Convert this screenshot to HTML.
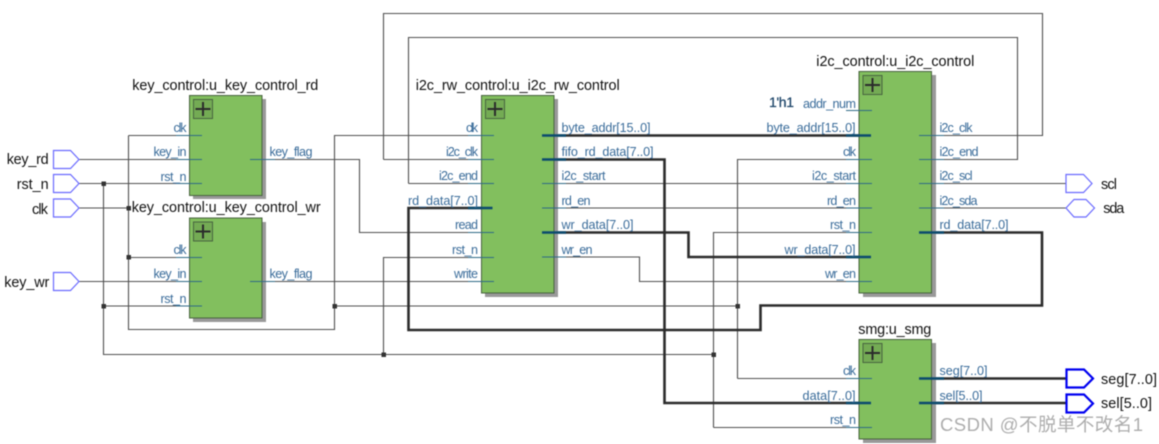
<!DOCTYPE html>
<html>
<head>
<meta charset="utf-8">
<style>
html,body{margin:0;padding:0;background:#fff;width:1159px;height:444px;overflow:hidden}
svg{display:block;filter:blur(.4px)}
text{font-family:"Liberation Sans","Noto Sans CJK SC",sans-serif}
.w{fill:none;stroke:#505050;stroke-width:1.1}
.t{fill:none;stroke:#2b2b2b;stroke-width:2.6}
.s{stroke:#2f6a86;stroke-width:1;fill:none}
.b{stroke:#0b4a6e;stroke-width:2.4;fill:none}
.sh{fill:#999}
.g{fill:#82bf5e;stroke:#48633f;stroke-width:1}
.ib{fill:#74ab54;stroke:#48633f;stroke-width:1}
.pl{fill:none;stroke:#2b2b2b;stroke-width:2}
.l{font-size:12.6px;fill:#3a6c9a}
.e{text-anchor:end}
.n{font-size:14.4px;fill:#111}
.p{fill:#fff;stroke:#6a6aff;stroke-width:1.2}
.q{fill:#fff;stroke:#0000f0;stroke-width:2.2}
.d{fill:#333}
</style>
</head>
<body>
<svg width="1159" height="444" viewBox="0 0 1159 444" xmlns="http://www.w3.org/2000/svg">
<path class="w" d="M79 159.5H202M79 183.5H202M79 208H128.5M128.5 135.5V329.5H334.5V135.5H494M128.5 135.5H202M128.5 257.5H202M103.5 183.5V354.5H713.5M103.5 306H202M79 281.5H494M250 159.5H359.5V232.5H494M383.5 354.5V257.5H494M713.5 427.5V232.5H872M713.5 427.5H872M335 306H737.5M737.5 378.5V159.5H872M737.5 378.5H872M383.5 159.5V13.5H1042.5V135.5H919M383.5 159.5H494M408.5 183.5V37.5H1017.5V159.5H919M408.5 183.5H494M542 183.5H872M542 208H872M542 257H639.5V281.5H872M919 183.5H1066M919 208H1066"/>
<path class="t" d="M492 208H408.5V330H760.5V305.5H1042V232.5H919M542 135.5H871M542 159.5H664.5V403H871M542 232.5H688.5V257H871M919 378.5H1066M919 403H1066"/>
<g class="d">
<rect x="101.500" y="181.500" width="4.500" height="4.500"/><rect x="126.500" y="206" width="4.500" height="4.500"/><rect x="126.500" y="255" width="4.500" height="4.500"/><rect x="101.500" y="304" width="4.500" height="4.500"/><rect x="332.500" y="304" width="4.500" height="4.500"/><rect x="381.500" y="352.500" width="4.500" height="4.500"/><rect x="711.500" y="352.500" width="4.500" height="4.500"/><rect x="735.500" y="304" width="4.500" height="4.500"/>
</g>
<rect class="sh" x="193" y="99" width="73" height="100"/><rect class="g" x="189.500" y="95.500" width="72.500" height="100"/>
<rect class="sh" x="193" y="222" width="73" height="100"/><rect class="g" x="189.500" y="218" width="72.500" height="100"/>
<rect class="sh" x="485" y="99" width="73" height="198"/><rect class="g" x="481.500" y="95.500" width="72.500" height="197.500"/>
<rect class="sh" x="863" y="75" width="73" height="222"/><rect class="g" x="859" y="71.500" width="72.500" height="221.500"/>
<rect class="sh" x="863" y="343" width="73" height="100"/><rect class="g" x="859" y="339.500" width="72.500" height="99.500"/>
<g>
<rect class="ib" x="193.500" y="99.500" width="19" height="19"/><path class="pl" d="M203 102V116M195.500 109H210.500"/>
<rect class="ib" x="193.500" y="222" width="19" height="19"/><path class="pl" d="M203 224.500V238.500M195.500 231.500H210.500"/>
<rect class="ib" x="485.500" y="99.500" width="19" height="19"/><path class="pl" d="M495 102V116M487.500 109H502.500"/>
<rect class="ib" x="863" y="75.500" width="19" height="19"/><path class="pl" d="M872.500 78V92M865 85H880"/>
<rect class="ib" x="863" y="343.500" width="19" height="19"/><path class="pl" d="M872.500 346V360M865 353H880"/>
</g>
<path class="s" d="M176 135.500H202M176 159.500H202M176 183.500H202M250 159.500H275M176 257.500H202M176 281.500H202M176 306H202M250 281.500H275M468 135.500H494M468 159.500H494M468 183.500H494M468 232.500H494M468 257.500H494M468 281.500H494M542 183.500H566M542 208H566M542 257H566M846 110.500H872M846 159.500H872M846 183.500H872M846 208H872M846 232.500H872M846 281.500H872M919 135.500H944M919 159.500H944M919 183.500H944M919 208H944M846 378.500H872M846 427.500H872"/>
<path class="b" d="M468 208H492.500M542 135.500H566M542 159.500H566M542 232.500H566M846 135.500H871M846 257H871M919 232.500H944M846 403H871M919 378.500H944M919 403H944"/>
<g class="l">
<text class="e" x="186.500" y="132" textLength="13">clk</text>
<text class="e" x="186.500" y="156" textLength="33">key_in</text>
<text class="e" x="186.500" y="181" textLength="26">rst_n</text>
<text x="269.500" y="156" textLength="43">key_flag</text>
<text class="e" x="186.500" y="254" textLength="13">clk</text>
<text class="e" x="186.500" y="278" textLength="33">key_in</text>
<text class="e" x="186.500" y="303" textLength="26">rst_n</text>
<text x="269.500" y="278" textLength="43">key_flag</text>
<text class="e" x="478" y="132" textLength="12">clk</text>
<text class="e" x="478" y="156" textLength="32">i2c_clk</text>
<text class="e" x="478" y="180" textLength="39">i2c_end</text>
<text class="e" x="478" y="205" textLength="70">rd_data[7..0]</text>
<text class="e" x="478" y="229" textLength="23">read</text>
<text class="e" x="478" y="254" textLength="26">rst_n</text>
<text class="e" x="478" y="278" textLength="24">write</text>
<text x="561.500" y="132" textLength="89">byte_addr[15..0]</text>
<text x="561.500" y="156" textLength="92">fifo_rd_data[7..0]</text>
<text x="561.500" y="180" textLength="44">i2c_start</text>
<text x="561.500" y="205" textLength="29">rd_en</text>
<text x="561.500" y="229" textLength="72">wr_data[7..0]</text>
<text x="561.500" y="254" textLength="31">wr_en</text>
<text class="e" x="856" y="108" textLength="53">addr_num</text>
<text class="e" x="855.500" y="132" textLength="89">byte_addr[15..0]</text>
<text class="e" x="856" y="156" textLength="13">clk</text>
<text class="e" x="856" y="180" textLength="44">i2c_start</text>
<text class="e" x="856" y="205" textLength="29">rd_en</text>
<text class="e" x="856" y="229" textLength="26">rst_n</text>
<text class="e" x="855.500" y="254" textLength="71">wr_data[7..0]</text>
<text class="e" x="856" y="278" textLength="31">wr_en</text>
<text x="939.500" y="132" textLength="33">i2c_clk</text>
<text x="939.500" y="156" textLength="39">i2c_end</text>
<text x="939.500" y="180" textLength="33">i2c_scl</text>
<text x="939.500" y="205" textLength="38">i2c_sda</text>
<text x="939.500" y="229" textLength="69">rd_data[7..0]</text>
<text class="e" x="856" y="375" textLength="13">clk</text>
<text class="e" x="855.500" y="400" textLength="53">data[7..0]</text>
<text class="e" x="856" y="424" textLength="26">rst_n</text>
<text x="939.500" y="375" textLength="48">seg[7..0]</text>
<text x="939.500" y="400" textLength="43">sel[5..0]</text>
</g>
<g class="n">
<text x="132.300" y="90" textLength="186">key_control:u_key_control_rd</text>
<text x="131.700" y="212" textLength="189">key_control:u_key_control_wr</text>
<text x="415.700" y="90" textLength="204">i2c_rw_control:u_i2c_rw_control</text>
<text x="816.300" y="66" textLength="158">i2c_control:u_i2c_control</text>
<text x="858.300" y="334" textLength="73">smg:u_smg</text>
<text x="6.700" y="164" textLength="42">key_rd</text>
<text x="16.700" y="189" textLength="32">rst_n</text>
<text x="32" y="214" textLength="16">clk</text>
<text x="4.300" y="287" textLength="45">key_wr</text>
<text x="1101" y="189" textLength="16">scl</text>
<text x="1103.300" y="213" textLength="21">sda</text>
<text x="1101" y="384" textLength="56">seg[7..0]</text>
<text x="1101" y="408" textLength="51">sel[5..0]</text>
<text x="769" y="107" textLength="25" style="fill:#1c4468;font-size:14px;stroke:#1c4468;stroke-width:.25">1'h1</text>
</g>
<path class="p" d="M53.500 150.500H70.500L79 159.500L70.500 168.500H53.500Z"/>
<path class="p" d="M53.500 174.500H70.500L79 183.500L70.500 192.500H53.500Z"/>
<path class="p" d="M53.500 199H70.500L79 208L70.500 217H53.500Z"/>
<path class="p" d="M53.500 272.500H70.500L79 281.500L70.500 290.500H53.500Z"/>
<path class="p" d="M1066 174.500H1083.500L1092 183.500L1083.500 192.500H1066Z"/>
<path class="p" d="M1066 208L1074 199.500H1086L1094.500 208L1086 217H1074Z"/>
<path class="q" d="M1066.500 369.500H1084L1093 378.500L1084 387.500H1066.500Z"/>
<path class="q" d="M1066.500 394.500H1084L1093 403.500L1084 412.500H1066.500Z"/>
<text x="940" y="431" textLength="203" style="font-size:18.500px;fill:#adadad">CSDN @不脱单不改名1</text>
</svg>
</body>
</html>
